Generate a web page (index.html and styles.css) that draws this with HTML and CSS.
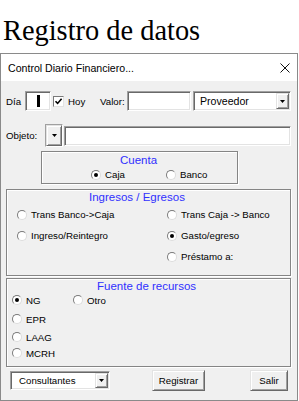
FILE: index.html
```html
<!DOCTYPE html>
<html>
<head>
<meta charset="utf-8">
<link rel="stylesheet" href="styles.css">
</head>
<body>
<div class="page-title">Registro de datos</div>
<div class="window">
  <div class="titlebar">
    <span class="caption">Control Diario Financiero...</span>
    <svg class="close" viewBox="0 0 10 10"><path d="M0.5 0.5L9.5 9.5M9.5 0.5L0.5 9.5" stroke="#111" stroke-width="1" fill="none"/></svg>
  </div>
  <div class="client">
    <div class="row row1">
      <span class="lbl w-dia">Día</span>
      <span class="field day"><span class="caret"></span></span>
      <span class="check"><svg viewBox="0 0 9 9"><path d="M1.5 4.2L3.6 6.4L7.6 1.8" stroke="#000" stroke-width="1.6" fill="none"/></svg></span>
      <span class="lbl w-hoy">Hoy</span>
      <span class="lbl w-valor">Valor:</span>
      <span class="field valor"></span>
      <span class="field combo proveedor">
        <span class="combo-text big">Proveedor</span>
        <span class="dd"><svg viewBox="0 0 5 3"><polygon points="0,0 5,0 2.5,3" fill="#000"/></svg></span>
      </span>
    </div>
    <div class="row row2">
      <span class="lbl w-obj">Objeto:</span>
      <span class="objbtn"><span class="dd tall"><svg viewBox="0 0 5 3"><polygon points="0,0 5,0 2.5,3" fill="#000"/></svg></span></span>
      <span class="field obj"></span>
    </div>
    <div class="frame cuenta">
      <div class="ftitle t-cuenta">Cuenta</div>
      <div class="cuenta-opts">
        <span class="opt"><span class="radio on"></span>Caja</span>
        <span class="opt"><span class="radio"></span>Banco</span>
      </div>
    </div>
    <div class="frame ingresos">
      <div class="ftitle t-ing">Ingresos / Egresos</div>
      <div class="ing-grid">
        <span class="opt"><span class="radio"></span>Trans Banco-&gt;Caja</span>
        <span class="opt"><span class="radio"></span>Trans Caja -&gt; Banco</span>
        <span class="opt"><span class="radio"></span>Ingreso/Reintegro</span>
        <span class="opt"><span class="radio on"></span>Gasto/egreso</span>
        <span class="opt"></span>
        <span class="opt"><span class="radio"></span>Préstamo a:</span>
      </div>
    </div>
    <div class="frame fuente">
      <div class="ftitle t-fue">Fuente de recursos</div>
      <div class="frow r-ng">
        <span class="opt w-ng"><span class="radio on"></span>NG</span>
        <span class="opt"><span class="radio"></span>Otro</span>
      </div>
      <div class="frow r-epr"><span class="opt"><span class="radio"></span>EPR</span></div>
      <div class="frow r-laag"><span class="opt"><span class="radio"></span>LAAG</span></div>
      <div class="frow r-mcrh"><span class="opt"><span class="radio"></span>MCRH</span></div>
    </div>
    <div class="row bottom">
      <span class="field combo consult">
        <span class="combo-text">Consultantes</span>
        <span class="dd"><svg viewBox="0 0 5 3"><polygon points="0,0 5,0 2.5,3" fill="#000"/></svg></span>
      </span>
      <span class="btn registrar">Registrar</span>
      <span class="btn salir">Salir</span>
    </div>
  </div>
</div>
</body>
</html>
```
FILE: styles.css
```css
* { box-sizing: border-box; }
body { margin: 0; background: #fff; font-family: "Liberation Sans", Arial, sans-serif; color: #000; }

.page-title {
  height: 53px;
  padding: 16px 0 0 3px;
  font-family: "Liberation Serif", "Times New Roman", serif;
  font-size: 28.4px;
  line-height: 29px;
}

.window {
  width: 298px;
  height: 348px;
  border: 1px solid #8a8a8a;
  display: flex;
  flex-direction: column;
}

.titlebar {
  height: 27px;
  flex: none;
  background: #fff;
  display: flex;
  align-items: center;
  justify-content: space-between;
  padding: 0 7px 0 7px;
  font-size: 10.6px;
}
.close { width: 10px; height: 10px; display: block; }

.client {
  flex: 1;
  background: #f0f0f0;
  padding: 10px 0 0 5px;
  font-size: 9.7px;
}

.row { display: flex; align-items: center; }
.row1 { height: 20px; }
.row2 { height: 23px; margin-top: 13px; }

.lbl { display: block; white-space: nowrap; }
.w-dia { width: 19px; }
.w-hoy { width: 32px; margin-left: 4px; }
.w-valor { width: 27px; }
.w-obj { width: 39px; }

.field {
  display: flex;
  align-items: center;
  background: #fff;
  height: 20px;
  border: 1px solid;
  border-color: #a0a0a0 #fff #fff #a0a0a0;
  box-shadow: inset 1px 1px 0 #696969, inset -1px -1px 0 #e3e3e3;
}
.day { width: 26px; justify-content: center; }
.caret { width: 3px; height: 12px; background: #000; display: block; }
.valor { width: 64px; }
.obj { width: 227px; margin-left: 1px; }

.check {
  width: 11px;
  height: 11px;
  margin-left: 2px;
  background: #fff;
  border: 1px solid;
  border-color: #7a7a7a #e3e3e3 #e3e3e3 #7a7a7a;
  display: flex;
  align-items: center;
  justify-content: center;
}
.check svg { width: 9px; height: 9px; display: block; }

.combo { justify-content: space-between; align-items: stretch; }
.combo-text { display: flex; align-items: center; }
.proveedor { width: 98px; margin-left: 2px; padding-left: 6px; }
.big { font-size: 10.6px; }

.dd {
  width: 13px;
  margin: 1px 1px 1px 0;
  background: #f0f0f0;
  border: 1px solid;
  border-color: #e3e3e3 #696969 #696969 #e3e3e3;
  box-shadow: inset 1px 1px 0 #fff, inset -1px -1px 0 #a0a0a0;
  display: flex;
  align-items: center;
  justify-content: center;
}
.dd svg { width: 5px; height: 3px; display: block; }

.objbtn {
  width: 18px;
  height: 23px;
  display: flex;
  border: 1px solid;
  border-color: #a0a0a0 #fff #fff #a0a0a0;
  background: #f0f0f0;
}
.objbtn .dd { flex: 1; margin: 0; width: auto; }

.frame {
  border: 1px solid #858585;
  box-shadow: inset 1px 1px 0 #fff, 1px 1px 0 #fff;
}
.ftitle {
  color: #2f2fff;
  font-size: 11.5px;
  line-height: 13px;
  height: 13px;
  white-space: nowrap;
}
.opt { display: flex; align-items: center; white-space: nowrap; }
.radio {
  width: 10px;
  height: 10px;
  flex: none;
  border-radius: 50%;
  background: #fff;
  border: 1px solid;
  border-color: #7a7a7a #dcdcdc #dcdcdc #7a7a7a;
  margin-right: 4px;
  display: flex;
  align-items: center;
  justify-content: center;
}
.radio.on::after {
  content: "";
  width: 4px;
  height: 4px;
  border-radius: 50%;
  background: #000;
}

.cuenta {
  width: 197px;
  height: 33px;
  margin: 4px 0 0 35px;
  padding-top: 2px;
}
.t-cuenta { padding-left: 78px; }
.cuenta-opts {
  display: grid;
  grid-template-columns: 75px auto;
  height: 15px;
  align-items: center;
  padding-left: 49px;
}

.ingresos {
  width: 285px;
  height: 87px;
  margin-top: 5px;
  padding-top: 1px;
}
.t-ing { padding-left: 82px; }
.ing-grid {
  display: grid;
  grid-template-columns: 150px 1fr;
  grid-auto-rows: 21px;
  align-items: center;
  padding-left: 10px;
}

.fuente {
  width: 285px;
  height: 89px;
  margin-top: 2px;
  padding: 1px 0 0 5px;
}
.t-fue { padding-left: 85px; }
.frow { display: flex; align-items: center; height: 12px; }
.w-ng { width: 61px; }
.r-ng { margin-top: 1px; }
.r-epr { margin-top: 7px; }
.r-laag { margin-top: 6px; }
.r-mcrh { margin-top: 4px; }

.bottom { height: 21px; margin-top: 3px; }
.consult { width: 100px; height: 19px; margin-left: 4px; padding-left: 8px; }
.consult .dd { margin: 1px 1px 1px 0; }

.btn {
  display: flex;
  align-items: center;
  justify-content: center;
  height: 21px;
  background: #f0f0f0;
  border: 1px solid;
  border-color: #e3e3e3 #696969 #696969 #e3e3e3;
  box-shadow: inset 1px 1px 0 #fff, inset -1px -1px 0 #a0a0a0;
}
.registrar { width: 53px; margin-left: 42px; }
.salir { width: 38px; margin-left: 45px; }
```
